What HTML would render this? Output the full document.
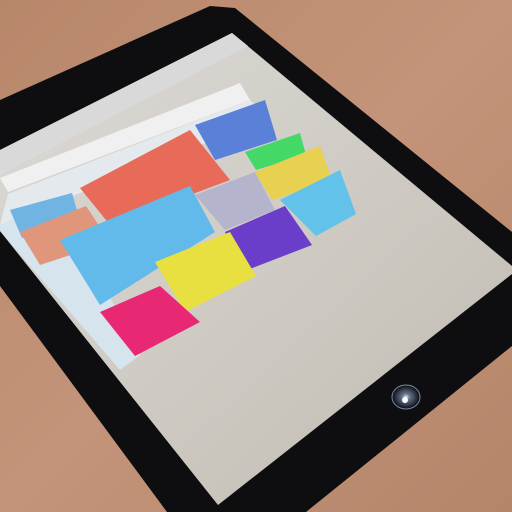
<!DOCTYPE html>
<html><head><meta charset="utf-8"><style>
html,body{margin:0;padding:0;width:512px;height:512px;overflow:hidden;background:#b98a6e}
</style></head><body>
<svg width="512" height="512" viewBox="0 0 512 512" xmlns="http://www.w3.org/2000/svg">
<defs>
<linearGradient id="wood" x1="0" y1="0" x2="1" y2="1">
<stop offset="0" stop-color="#b8876a"/><stop offset="0.5" stop-color="#c4947a"/><stop offset="1" stop-color="#b5856a"/>
</linearGradient>
<linearGradient id="scr" x1="0" y1="0" x2="1" y2="1">
<stop offset="0" stop-color="#dcdad6"/><stop offset="0.5" stop-color="#cfcbc4"/><stop offset="1" stop-color="#c0bab0"/>
</linearGradient>
<radialGradient id="btn"><stop offset="0" stop-color="#e8f0ff"/><stop offset="0.25" stop-color="#6a7a90"/><stop offset="1" stop-color="#0a0a10"/></radialGradient>
</defs>
<rect width="512" height="512" fill="url(#wood)"/>
<polygon points="0,100 210,6 235,8 512,232 512,346 306,512 167,512 0,286" fill="#0e0e10"/>
<polygon points="0,150 232,33 512,266 512,274 218,505 0,231" fill="url(#scr)"/>
<polygon points="0,150 232,33 248,46 0,175" fill="#d9d9d9"/>
<polygon points="0,178 240,83 250,100 8,192" fill="#f0f0f0"/>
<polygon points="8,194 250,100 268,118 0,225" fill="#e4e9ee"/>
<polygon points="0,225 60,200 140,355 120,370 0,231" fill="#d6e4ee"/>
<polygon points="10,210 72,193 82,228 22,238" fill="#70b4e4"/>
<polygon points="20,232 86,206 110,242 40,265" fill="#e0967a"/>
<polygon points="80,188 190,130 230,180 110,225" fill="#e86a58"/>
<polygon points="195,125 265,100 277,140 215,160" fill="#5a80d8"/>
<polygon points="245,152 300,133 306,155 256,170" fill="#44d866"/>
<polygon points="255,172 320,146 332,180 272,200" fill="#e8d050"/>
<polygon points="280,200 340,170 356,214 316,236" fill="#62c2ea"/>
<polygon points="195,195 255,172 275,210 225,230" fill="#b4b4cc"/>
<polygon points="225,232 285,206 312,245 242,272" fill="#6a3ec8"/>
<polygon points="60,240 190,186 215,232 100,305" fill="#62baea"/>
<polygon points="155,262 230,232 256,276 185,312" fill="#e8e040"/>
<polygon points="100,312 160,286 200,322 135,356" fill="#e82872"/>
<ellipse cx="406" cy="397" rx="14" ry="12" fill="url(#btn)" stroke="#7a8aa0" stroke-width="1"/>
<circle cx="405" cy="400" r="3" fill="#fff"/>
</svg>
</body></html>
